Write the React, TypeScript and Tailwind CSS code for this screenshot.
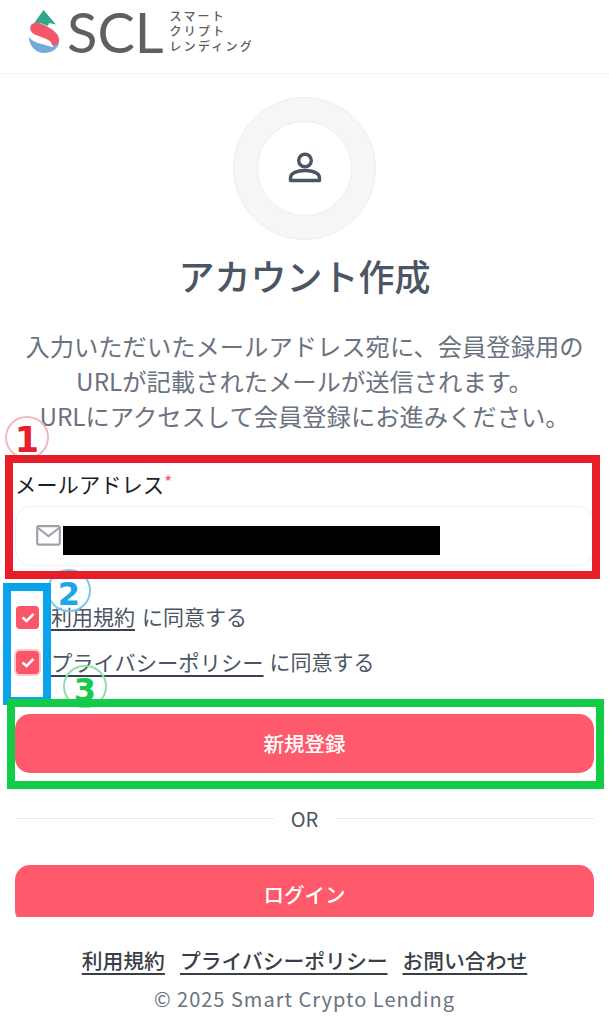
import React from "react";

const jp = "font-['Noto_Sans_CJK_JP','Noto_Sans',sans-serif]";

function Logo() {
  return (
    <div className="flex items-center pl-[29px] h-[73px]">
      <svg width="32" height="44" viewBox="0 0 32 44" className="shrink-0 mt-[-9px]">
        <path d="M14.5 0 L27 14.5 L20 13 L19 16 C15 14 11 12.5 9 13 L4.5 14 Z" fill="#2fa98c" />
        <path d="M2 15 C6 11 12 13 19 17 C26 21 31 25 30 32 C29 36 26 37 23 35 C22 29 14 28 7 25 C2 23 0 19 2 15 Z" fill="#f2566b" />
        <path d="M0 27 C4 33 14 34 23 37 L30 33 C29 39 22 43 15 43 C7 43 0 36 0 27 Z" fill="#74a9de" />
      </svg>
      <span className="font-['Lato',sans-serif] text-[56px] leading-[60px] font-normal text-[#5f5f5f] ml-[6px] mt-[-10px] shrink-0 whitespace-nowrap">SCL</span>
      <div className={`${jp} text-[12px] leading-[15px] font-medium text-[#5c5c5c] tracking-[2.2px] ml-[6px] mt-[-13px] whitespace-nowrap`}>
        <div>スマート</div>
        <div>クリプト</div>
        <div>レンディング</div>
      </div>
    </div>
  );
}

function UserIcon() {
  return (
    <svg width="36" height="36" viewBox="0 0 36 36" fill="none" stroke="#4b5563" strokeWidth="3.4">
      <circle cx="18" cy="9.5" r="6.3" />
      <path d="M3.5 29.5 V27 C3.5 22 10 19.5 18 19.5 C26 19.5 32.5 22 32.5 27 V29.5 Z" strokeLinejoin="round" />
    </svg>
  );
}

function MailIcon() {
  return (
    <svg width="25" height="21" viewBox="0 0 25 21" fill="none" stroke="#9ca3af" strokeWidth="2.2">
      <rect x="1.2" y="1.2" width="22.6" height="18.4" rx="1.5" />
      <path d="M2 3 L12.5 11 L23 3" />
    </svg>
  );
}

function Check({ ring }: { ring?: boolean }) {
  return (
    <span className={`flex h-[23px] w-[23px] shrink-0 items-center justify-center rounded-[4px] bg-[#f9566a] ml-[1px] ${ring ? "shadow-[0_0_0_2px_#fbc6cd]" : ""}`}>
      <svg width="14" height="11" viewBox="0 0 14 11" fill="none" stroke="#fff" strokeWidth="2.6">
        <path d="M1.5 5.5 L5.5 9 L12.5 2" />
      </svg>
    </span>
  );
}

function Badge({ n, className }: { n: string; className: string }) {
  return (
    <div className={`absolute h-[43px] w-[44px] rounded-full border-2 flex items-center justify-center font-['DejaVu_Sans',sans-serif] font-bold leading-none ${className}`}>
      {n}
    </div>
  );
}

export default function App() {
  return (
    <div className={`${jp} relative h-[1024px] w-full overflow-hidden bg-white`}>
      <header className="h-[74px] border-b border-[#f1f2f4]">
        <Logo />
      </header>

      <main className="h-[843px] overflow-hidden px-[15px]">
        <div className="mt-[23px] mx-auto flex h-[143px] w-[143px] items-center justify-center rounded-full border border-[#eceef1] bg-[#f5f6f8]">
          <div className="flex h-[95px] w-[95px] items-center justify-center rounded-full border border-[#eceef1] bg-white">
            <UserIcon />
          </div>
        </div>

        <h1 className="mt-[10px] text-center text-[36px] leading-[50px] font-medium text-[#4b5563]">アカウント作成</h1>

        <p className="mt-[28px] -mx-[15px] text-center text-[24.3px] leading-[35px] text-[#6b7280] whitespace-nowrap">
          入力いただいたメールアドレス宛に、会員登録用の<br />
          URLが記載されたメールが送信されます。<br />
          URLにアクセスして会員登録にお進みください。
        </p>

        <label className="mt-[35.5px] block text-[21.3px] leading-[30px] text-[#1a1f29]">
          メールアドレス<span className="text-[#f9566a] text-[18px] align-top leading-[24px]">*</span>
        </label>

        <div className="mt-[7px] flex h-[60px] items-center rounded-[16px] border border-[#eef0f2] pl-[20px]">
          <MailIcon />
          <div className="ml-[2px] mt-[9px] h-[29px] w-[377px] bg-black" />
        </div>

        <div className="mt-[29px] flex h-[45px] items-center text-[21px] text-[#4b5563]">
          <Check />
          <a className="ml-[12px] text-[#4b5563] underline underline-offset-4 decoration-[#374151]">利用規約</a>
          <span className="ml-[7px]">に同意する</span>
        </div>
        <div className="flex h-[45px] items-center text-[21px] text-[#4b5563]">
          <Check ring />
          <a className="ml-[12px] text-[21.3px] text-[#4b5563] underline underline-offset-4 decoration-[#374151]">プライバシーポリシー</a>
          <span className="ml-[6px]">に同意する</span>
        </div>

        <button className="mt-[29px] flex h-[59px] w-full items-center justify-center rounded-[15px] bg-[#ff5a6c] text-[20.5px] font-medium text-white">
          新規登録
        </button>

        <div className="mt-[31px] flex h-[30px] items-center gap-[17px] text-[20px] text-[#4b5563]">
          <div className="h-px flex-1 bg-[#e8eaed]" />
          <span>OR</span>
          <div className="h-px flex-1 bg-[#e8eaed]" />
        </div>

        <button className="mt-[31px] flex h-[60px] w-full items-center justify-center rounded-[15px] bg-[#ff5a6c] text-[20.5px] font-medium text-white">
          ログイン
        </button>
      </main>

      <footer>
        <div className="mt-[29px] flex h-[30px] items-center justify-center gap-[15px] text-[20.8px] font-medium text-[#3a3f47]">
          <a className="underline underline-offset-4">利用規約</a>
          <a className="underline underline-offset-4">プライバシーポリシー</a>
          <a className="underline underline-offset-4">お問い合わせ</a>
        </div>
        <div className="mt-[8px] h-[30px] text-center text-[20px] leading-[30px] tracking-[1px] text-[#6b7280]">
          © 2025 Smart Crypto Lending
        </div>
      </footer>

      <Badge n="1" className="left-[5px] top-[416px] text-[35px] pt-[5px] border-[#f3b8bc] text-[#e8202c]" />
      <Badge n="2" className="left-[47px] top-[569px] text-[32px] pt-[6px] border-[#7fc6ee] text-[#1ea7e8]" />
      <Badge n="3" className="left-[63px] top-[665px] text-[32px] pt-[6px] border-[#8fe0a8] text-[#19c94f]" />

      <div className="absolute left-[5px] top-[455px] h-[124px] w-[595px] border-[8px] border-[#e71d27]" />
      <div className="absolute left-[3px] top-[583px] h-[122px] w-[48px] border-[8px] border-[#08a3ea]" />
      <div className="absolute left-[7px] top-[699px] h-[90px] w-[597px] border-[8px] border-[#10cc47]" />
    </div>
  );
}
